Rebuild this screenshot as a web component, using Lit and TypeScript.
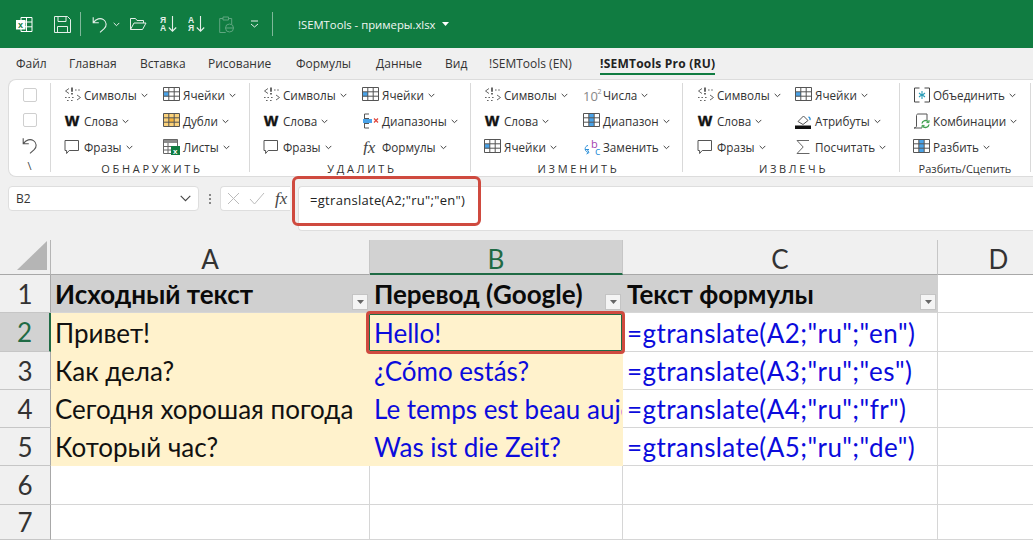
import { LitElement, css, html, svg } from "lit";
import { customElement } from "lit/decorators.js";

const TABLE_LINES = svg`<path d="M.5 .5h16v13H.5zM5.8 .5v13M11.2 .5v13M.5 4.8h16M.5 9.2h16" fill="none" stroke="#555" stroke-width="1"/>`;

function icon(body: unknown, w = 18, h = 16) {
	return html`<svg width=${w} height=${h} viewBox="0 0 ${w} ${h}" xmlns="http://www.w3.org/2000/svg">${body}</svg>`;
}

const ICONS: Record<string, unknown> = {
	symbols: icon(svg`<g fill="none" stroke="#666" stroke-width="1">
		<path d="M5 1.5 1.5 4 5 6.5"/><path d="M8 .5v4.2M8 6v1.6" stroke-width="1.6" stroke="#444"/>
		<path d="M11 3h1.6M14.2 3h1.6M1 10.5h1.6M4.4 10.5h1.6M8 10.5h1.6M13 8l3.5 2.5L13 13M3 13.5h1.6M7 13.5h1.6"/></g>`),
	words: icon(svg`<text x="1" y="13" font-family="Liberation Sans" font-weight="700" font-size="15" fill="#111" stroke="#111" stroke-width=".5">W</text>`),
	bubble: icon(svg`<path d="M1 1.5h13.5v10H5.2L2.6 14.5v-3H1z" fill="#fff" stroke="#555"/>`),
	cells: icon(svg`<rect x="1" y="5" width="5" height="4.5" fill="#4aa3e8"/><g>${TABLE_LINES}</g>`),
	dupes: icon(svg`<rect x="1" y="1" width="15" height="12.5" fill="#fbd27a"/><rect x="6" y="5" width="5" height="4.5" fill="#f7b53c"/><g>${TABLE_LINES}</g>`),
	sheets: icon(svg`<rect x=".5" y=".5" width="14" height="3.5" fill="#8c8c8c"/><path d="M.5 .5h14v14H.5zM.5 7.5h8M.5 11h8M5 4v10.5" fill="none" stroke="#666"/><rect x="8" y="7" width="9" height="9" fill="#107c41"/><text x="10" y="14.6" font-family="Liberation Sans" font-weight="700" font-size="8" fill="#fff">x</text>`),
	ranges: icon(svg`<path d="M7 1H2.5v14H7M2 5.5h5M2 10.5h5" fill="none" stroke="#555"/><rect x="1" y="6" width="9" height="4" fill="#4aa3e8"/><path d="M12 5.5l4 4M16 5.5l-4 4" stroke="#e0443a" stroke-width="1.2" fill="none"/>`),
	fx: icon(svg`<text x="1" y="13.5" font-family="Liberation Serif" font-style="italic" font-size="17" fill="#444">fx</text>`),
	numbers: icon(svg`<text x="0" y="14" font-family="Open Sans" font-size="13" fill="#888">10</text><text x="14.5" y="7" font-family="Open Sans" font-size="7" fill="#888">2</text>`, 20),
	range: icon(svg`<rect x="6" y="1" width="5" height="12.5" fill="#4aa3e8"/><g>${TABLE_LINES}</g>`),
	replace: icon(svg`<path d="M5 6.5C1.5 7 1 12 5 13.5M3.5 15l2.5-1.5L4.5 11M6 10.5H2" fill="none" stroke="#2b8fd8" stroke-width="1"/><text x="8" y="9" font-family="Open Sans" font-size="11" fill="#a43fb0">b</text><text x="12" y="16" font-family="Open Sans" font-size="11" fill="#2b8fd8">c</text>`, 18, 17),
	fill: icon(svg`<path d="M3 8.5 8.5 3l4.5 4.5L8 11.5z" fill="#fff" stroke="#555"/><path d="M13.5 4c1.5.5 1.8 2 1.4 3" fill="none" stroke="#2b8fd8" stroke-width="1.4"/><rect x="0" y="12.5" width="16" height="3.5" fill="#111"/>`),
	sigma: icon(svg`<path d="M14 1.5H2l6.2 6.5L2 14.5h12.5" fill="none" stroke="#666" stroke-width="1"/>`),
	merge: icon(svg`<path d="M6.5 1H1.5v14h5M11.5 1h5v14h-5" fill="none" stroke="#444"/><path d="M9 4v8M6 6l2.5 2L6 10M12 6 9.5 8l2.5 2" fill="none" stroke="#2b9db8" stroke-width="1.1"/>`),
	combos: icon(svg`<path d="M3.5 13V2.5c0-1 .8-1.5 1.5-1.5h9v6M1 15h8M3.5 13c0 1-1 2-2.5 2" fill="none" stroke="#555"/><path d="M9 10.5a3.6 3.6 0 0 1 6.4-1.6M16 11.5a3.6 3.6 0 0 1-6.4 1.6" fill="none" stroke="#3e9f4e" stroke-width="1.4"/><path d="M16 7v2.6h-2.6M9 15v-2.6h2.6" fill="none" stroke="#3e9f4e"/>`),
	split: icon(svg`<rect x="6" y="1" width="5" height="12.5" fill="#4aa3e8"/><g>${TABLE_LINES}</g>`)
};

const CHEVRON = html`<svg class="chev" width="7" height="5" viewBox="0 0 7 5"><path d="M.7 .9 3.5 3.7 6.3 .9" fill="none" stroke="#444" stroke-width="1"/></svg>`;

type Item = [icon: string, label: string];
type Group = { cls: string; title: string; spaced?: boolean; items: Item[] };

const GROUPS: Group[] = [
	{
		cls: "g1",
		title: "ОБНАРУЖИТЬ",
		spaced: true,
		items: [["symbols", "Символы"], ["words", "Слова"], ["bubble", "Фразы"], ["cells", "Ячейки"], ["dupes", "Дубли"], ["sheets", "Листы"]]
	},
	{
		cls: "g2",
		title: "УДАЛИТЬ",
		spaced: true,
		items: [["symbols", "Символы"], ["words", "Слова"], ["bubble", "Фразы"], ["cells", "Ячейки"], ["ranges", "Диапазоны"], ["fx", "Формулы"]]
	},
	{
		cls: "g3",
		title: "ИЗМЕНИТЬ",
		spaced: true,
		items: [["symbols", "Символы"], ["words", "Слова"], ["cells", "Ячейки"], ["numbers", "Числа"], ["range", "Диапазон"], ["replace", "Заменить"]]
	},
	{
		cls: "g4",
		title: "ИЗВЛЕЧЬ",
		spaced: true,
		items: [["symbols", "Символы"], ["words", "Слова"], ["bubble", "Фразы"], ["cells", "Ячейки"], ["fill", "Атрибуты"], ["sigma", "Посчитать"]]
	},
	{
		cls: "g5",
		title: "Разбить/Сцепить",
		items: [["merge", "Объединить"], ["combos", "Комбинации"], ["split", "Разбить"]]
	}
];

const TABS = ["Файл", "Главная", "Вставка", "Рисование", "Формулы", "Данные", "Вид", "!SEMTools (EN)", "!SEMTools Pro (RU)"];

const ROWS = [
	["Привет!", "Hello!", '=gtranslate(A2;"ru";"en")'],
	["Как дела?", "¿Cómo estás?", '=gtranslate(A3;"ru";"es")'],
	["Сегодня хорошая погода", "Le temps est beau aujourd'hui", '=gtranslate(A4;"ru";"fr")'],
	["Который час?", "Was ist die Zeit?", '=gtranslate(A5;"ru";"de")']
];

@customElement("app-root")
export class AppRoot extends LitElement {
	protected renderTitleBar() {
		return html`<div class="titlebar">
			<svg class="q-excel" width="17" height="17" viewBox="0 0 17 17">
				<path d="M5 1.5h11v14H5z" fill="none" stroke="#fff"/>
				<path d="M10.5 1.5v14M5 6h11M5 10.8h11" stroke="#fff" fill="none"/>
				<rect x="0" y="4" width="9.5" height="9.5" fill="#fff"/>
				<text x="2" y="12" font-family="Liberation Sans" font-weight="700" font-size="9" fill="#107c41">x</text>
			</svg>
			<svg class="q-save" width="17" height="17" viewBox="0 0 17 17" fill="none" stroke="#e4efe9">
				<path d="M.5 .5h13l3 3v13H.5zM4 .5v5h8v-5M3.5 16.5v-6h10v6"/>
			</svg>
			<i class="q-sep"></i>
			<svg class="q-undo" width="16" height="17" viewBox="0 0 16 17" fill="none" stroke="#e4efe9" stroke-width="1.1">
				<path d="M1.2 1.2v5.6h5.6M1.4 6.6C4 2.5 8.5 1.8 11.5 3.6c3.4 2.2 3.4 6.6.7 9L8 16.4"/>
			</svg>
			<svg class="q-chev" width="7" height="5" viewBox="0 0 7 5"><path d="M.7 .9 3.5 3.7 6.3 .9" fill="none" stroke="#e4efe9"/></svg>
			<svg class="q-open" width="17" height="14" viewBox="0 0 17 14" fill="none" stroke="#e4efe9">
				<path d="M.5 12.5V1.5h5l1.5 2h6.5v2.5M.5 12.5h12l3.5-6.5H4z"/>
			</svg>
			<svg class="q-sort" width="18" height="18" viewBox="0 0 18 18">
				<text x="0" y="7.5" font-family="Liberation Sans" font-weight="700" font-size="8.5" fill="#e4efe9">Я</text>
				<text x="0" y="16" font-family="Liberation Sans" font-weight="700" font-size="8.5" fill="#e4efe9">А</text>
				<path d="M12.5 1v15M8.8 12.5l3.7 3.7 3.7-3.7" fill="none" stroke="#e4efe9" stroke-width="1.1"/>
			</svg>
			<svg class="q-sort2" width="18" height="18" viewBox="0 0 18 18">
				<text x="0" y="7.5" font-family="Liberation Sans" font-weight="700" font-size="8.5" fill="#e4efe9">А</text>
				<text x="0" y="16" font-family="Liberation Sans" font-weight="700" font-size="8.5" fill="#e4efe9">Я</text>
				<path d="M12.5 1v15M8.8 12.5l3.7 3.7 3.7-3.7" fill="none" stroke="#e4efe9" stroke-width="1.1"/>
			</svg>
			<svg class="q-clip" width="15" height="17" viewBox="0 0 15 17" fill="none" stroke="#5fa680">
				<path d="M4 2.5H.7v14h6M9.5 2.5h3.2V8M4 1h5.5v3H4z"/><circle cx="10.5" cy="12" r="4"/><path d="M6.5 12h8"/>
			</svg>
			<svg class="q-more" width="9" height="8" viewBox="0 0 9 8" fill="none" stroke="#e4efe9">
				<path d="M1 1h7M1 4 4.5 7 8 4"/>
			</svg>
			<i class="q-sep"></i>
			<span class="doc">!SEMTools - примеры.xlsx</span>
			<svg width="7" height="4" viewBox="0 0 7 4"><path d="M0 0h7L3.5 4z" fill="#fff"/></svg>
		</div>`;
	}

	protected renderGroup(group: Group) {
		return html`<section class="group ${group.cls}">
			<div class="items">
				${group.items.map(
					([name, label]) => html`<div class="item"><span class="ico">${ICONS[name]}</span><span class="lbl">${label}</span>${CHEVRON}</div>`
				)}
			</div>
			<div class="gtitle ${group.spaced ? "spaced" : ""}">${group.title}</div>
		</section>`;
	}

	protected renderSheet() {
		const filter = html`<span class="filter"><svg width="7" height="4" viewBox="0 0 7 4"><path d="M0 0h7L3.5 4z" fill="#666"/></svg></span>`;
		const empty = [6, 7];
		return html`<div class="sheet">
			<div class="corner"><svg width="30" height="30" viewBox="0 0 30 30"><path d="M30 0v29H0z" fill="#b5b5b5"/></svg></div>
			<div class="colh">A</div><div class="colh sel">B</div><div class="colh">C</div><div class="colh">D</div>

			<div class="rowh">1</div>
			<div class="cell head">Исходный текст${filter}</div>
			<div class="cell head">Перевод (Google)${filter}</div>
			<div class="cell head">Текст формулы${filter}</div>
			<div class="cell"></div>

			${ROWS.map(
				(row, i) => html`<div class="rowh ${i === 0 ? "sel" : ""}">${i + 2}</div>
					<div class="cell fill">${row[0]}</div>
					<div class="cell fill blue">${row[1]}</div>
					<div class="cell blue formula-cell">${row[2]}</div>
					<div class="cell"></div>`
			)}
			${empty.map(
				(n) => html`<div class="rowh">${n}</div><div class="cell"></div><div class="cell"></div><div class="cell"></div><div class="cell"></div>`
			)}
			<div class="cursor"></div>
		</div>`;
	}

	render() {
		return html`
			${this.renderTitleBar()}
			<nav class="tabs">
				${TABS.map((t, i) => html`<span class=${i === TABS.length - 1 ? "tab active" : "tab"}>${t}</span>`)}
			</nav>
			<div class="ribbon">
				<div class="first">
					<span class="check"></span>
					<span class="check"></span>
					<svg width="16" height="17" viewBox="0 0 16 17" fill="none" stroke="#555" stroke-width="1.1">
						<path d="M1.2 1.2v5.6h5.6M1.4 6.6C4 2.5 8.5 1.8 11.5 3.6c3.4 2.2 3.4 6.6.7 9L8 16.4"/>
					</svg>
					<span class="slash">\\</span>
				</div>
				${GROUPS.map((g) => this.renderGroup(g))}
			</div>
			<div class="fbar">
				<div class="namebox"><span>B2</span>
					<svg width="11" height="7" viewBox="0 0 11 7"><path d="M.7 .9 5.5 5.7 10.3 .9" fill="none" stroke="#444" stroke-width="1.1"/></svg>
				</div>
				<div class="dots"><i></i><i></i><i></i></div>
				<div class="fxbox">
					<svg width="13" height="13" viewBox="0 0 13 13"><path d="M1 1l11 11M12 1 1 12" stroke="#bbb" fill="none"/></svg>
					<svg width="16" height="13" viewBox="0 0 16 13"><path d="M1 7l4.5 5L15 1" stroke="#bbb" fill="none"/></svg>
					<span class="fxt">fx</span>
				</div>
				<div class="formula">=gtranslate(A2;"ru";"en")</div>
				<div class="redbox"></div>
			</div>
			${this.renderSheet()}
		`;
	}

	static styles = css`
	:host {
		display: block;
		width: 1033px;
		height: 540px;
		overflow: hidden;
		background: #f0f0f0;
		font-family: "Open Sans", "Noto Sans", sans-serif;
		color: #333;
	}
	.titlebar {
		height: 48px;
		background: #107c41;
		display: flex;
		align-items: center;
		box-sizing: border-box;
		padding-left: 16px;
		color: #e4efe9;
	}
	.q-excel { margin-right: 21px; }
	.q-save { margin-right: 9px; }
	.q-sep { width: 1px; height: 24px; background: #7fb89a; display: block; }
	.q-undo { margin-left: 11px; margin-right: 5px; }
	.q-chev { margin-right: 10px; }
	.q-open { margin-right: 13px; }
	.q-sort { margin-right: 10px; }
	.q-sort2 { margin-right: 13px; }
	.q-clip { margin-right: 16px; }
	.q-more { margin-right: 13px; }
	.doc { margin-left: 25px; margin-right: 6px; font-size: 11.3px; color: #f1f7f3; }
	.tabs {
		height: 31px;
		display: grid;
		grid-template-columns: 53px 71px 68px 88px 80px 69px 44px 111px auto;
		justify-content: start;
		padding-left: 16px;
		align-items: start;
		font-size: 12px;
		color: #333;
	}
	.tab { line-height: 16px; margin-top: 8px; white-space: nowrap; }
	.tab.active {
		justify-self: start;
		font-weight: 700;
		letter-spacing: 0.22px;
		color: #222;
		height: 19px;
		box-sizing: border-box;
		border-bottom: 2px solid #107c41;
	}
	.ribbon {
		height: 98px;
		box-sizing: border-box;
		margin-left: 8px;
		background: #fff;
		border: 1px solid #dcdcdc;
		border-right: none;
		border-radius: 8px 0 0 8px;
		display: flex;
		align-items: stretch;
	}
	.first {
		width: 42px;
		flex: none;
		display: flex;
		flex-direction: column;
		align-items: center;
		padding-top: 5px;
		margin: 3px 0 4px;
		box-sizing: border-box;
		border-right: 1px solid #d9d9d9;
	}
	.check {
		width: 12px;
		height: 12px;
		border: 1px solid #cfcfcf;
		border-radius: 2px;
		margin-bottom: 11px;
		flex: none;
	}
	.first svg { margin-top: -1px; flex: none; }
	.slash { font-size: 11px; line-height: 14px; margin-top: 5px; color: #444; }
	.group {
		flex: none;
		margin-top: 3px;
		margin-bottom: 4px;
		box-sizing: border-box;
		border-right: 1px solid #d9d9d9;
		display: flex;
		flex-direction: column;
	}
	.g1 { width: 199px; padding-left: 13px; }
	.g2 { width: 221px; padding-left: 13px; }
	.g3 { width: 212px; padding-left: 13px; }
	.g4 { width: 217px; padding-left: 14px; }
	.g5 { width: 131px; padding-left: 13px; }
	.items {
		display: grid;
		grid-template-columns: 99px auto;
		grid-template-rows: repeat(3, 26px);
		grid-auto-flow: column;
		justify-content: start;
		height: 80px;
		flex: none;
		margin-top: -1px;
	}
	.g4 .items { grid-template-columns: 98px auto; }
	.g5 .items { grid-template-columns: auto; }
	.item { display: flex; align-items: center; font-size: 11.7px; color: #333; white-space: nowrap; }
	.ico { width: 20px; flex: none; display: flex; align-items: center; }
	.lbl { margin-right: 4px; }
	.gtitle {
		font-size: 11px;
		line-height: 14px;
		text-align: center;
		margin-left: -13px;
		color: #333;
	}
	.gtitle.spaced { letter-spacing: 2.7px; padding-left: 4px; }
	.fbar {
		position: relative;
		height: 63px;
		box-sizing: border-box;
		padding-top: 9px;
		padding-left: 8px;
		display: flex;
		align-items: flex-start;
	}
	.namebox {
		width: 191px;
		height: 25px;
		box-sizing: border-box;
		background: #fff;
		border: 1px solid #dedede;
		border-radius: 4px;
		display: flex;
		align-items: center;
		justify-content: space-between;
		padding: 0 7px;
		font-size: 12px;
		color: #333;
	}
	.dots {
		width: 21px;
		height: 25px;
		display: flex;
		flex-direction: column;
		align-items: center;
		justify-content: center;
		gap: 2px;
	}
	.dots i { width: 2px; height: 2px; background: #888; display: block; }
	.fxbox {
		width: 70px;
		height: 25px;
		box-sizing: border-box;
		background: #fff;
		border: 1px solid #dedede;
		border-radius: 4px 0 0 4px;
		border-right: none;
		display: flex;
		align-items: center;
		gap: 9px;
		padding-left: 6px;
	}
	.fxt { font: italic 17px "Liberation Serif", serif; color: #444; margin-left: 1px; }
	.formula {
		margin-left: 8px;
		flex: 1;
		height: 45px;
		box-sizing: border-box;
		background: #fff;
		border: 1px solid #dedede;
		border-right: none;
		border-radius: 4px 0 0 4px;
		padding: 5px 0 0 11px;
		font-size: 13px;
		letter-spacing: 0.3px;
		line-height: 17px;
		color: #222;
	}
	.redbox {
		position: absolute;
		left: 292px;
		top: -1px;
		width: 189px;
		height: 50px;
		box-sizing: border-box;
		border: 3px solid #cf4a3f;
		border-radius: 6px;
	}
	.sheet {
		position: relative;
		display: grid;
		grid-template-columns: 51px 319px 253px 315px 122px;
		grid-template-rows: 35px 38px 39px 38px 38px 38px 39px 35px;
		background: #fff;
		font-family: "Lato", "Carlito", "Open Sans", sans-serif;
		font-size: 26px;
		color: #111;
	}
	.corner {
		background: #f0f0f0;
		border-right: 1px solid #b5b5b5;
		border-bottom: 1px solid #a8a8a8;
		display: flex;
		align-items: flex-end;
		justify-content: flex-end;
		padding: 0 3px 3px 0;
	}
	.colh {
		background: #f0f0f0;
		border-right: 1px solid #c6c6c6;
		border-bottom: 1px solid #a8a8a8;
		display: flex;
		align-items: flex-end;
		justify-content: center;
		padding-bottom: 1px;
		color: #333;
		line-height: 28px;
	}
	.colh.sel {
		background: #d2d2d2;
		color: #1f6b45;
		border-bottom: 2px solid #1f6b45;
		padding-bottom: 0;
	}
	.rowh {
		background: #f0f0f0;
		border-right: 1px solid #a8a8a8;
		border-bottom: 1px solid #c6c6c6;
		display: flex;
		align-items: center;
		justify-content: center;
		color: #333;
	}
	.rowh.sel {
		background: #d2d2d2;
		color: #1f6b45;
		border-right: 2px solid #1f6b45;
	}
	.cell {
		position: relative;
		border-right: 1px solid #d6d6d6;
		border-bottom: 1px solid #d6d6d6;
		padding: 1px 0 0 4px;
		display: flex;
		align-items: center;
		white-space: nowrap;
		overflow: hidden;
		min-width: 0;
	}
	.head {
		background: #d0d0d0;
		font-weight: 700;
		color: #0a0a0a;
		border-right-color: #d0d0d0;
	}
	.fill { background: #fff2cc; border-right-color: #fff2cc; border-bottom-color: #fff2cc; }
	.blue { color: #0b0bdc; }
	.formula-cell { letter-spacing: 0.42px; }
	.filter {
		position: absolute;
		right: 1px;
		bottom: 2px;
		width: 16px;
		height: 16px;
		box-sizing: border-box;
		background: #f4f4f4;
		border: 1px solid #c4c4c4;
		display: flex;
		align-items: center;
		justify-content: center;
	}
	.cursor {
		position: absolute;
		left: 366px;
		top: 71px;
		width: 259px;
		height: 43px;
		box-sizing: border-box;
		border: 3px solid #cf4a3f;
		border-radius: 4px;
		box-shadow: inset 0 0 0 1px #1f6b45;
	}
	`;
}
